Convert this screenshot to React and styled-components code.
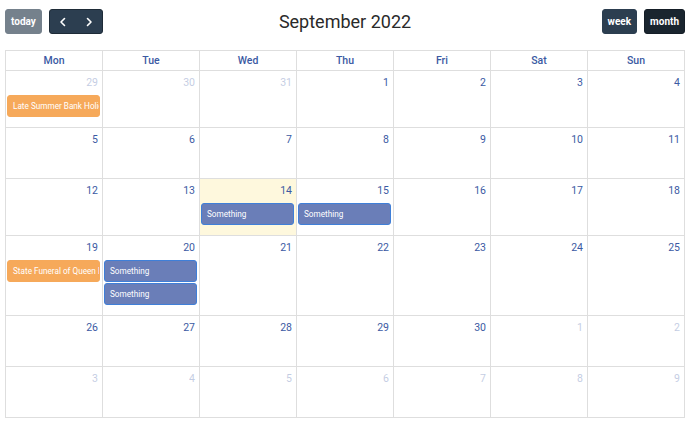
import React from "react";
import styled, { createGlobalStyle } from "styled-components";

const Global = createGlobalStyle`
  html, body { margin: 0; padding: 0; background: #fff; }
  body { font-family: Roboto, "Liberation Sans", sans-serif; }
`;

const Page = styled.div`
  padding: 9px 5px 0 5px;
  width: 690px;
  box-sizing: border-box;
`;

const Toolbar = styled.div`
  display: grid;
  grid-template-columns: 1fr auto 1fr;
  align-items: center;
  height: 25px;
  margin-bottom: 16px;
`;

const Group = styled.div`
  display: flex;
  gap: ${(p) => p.$gap || 0}px;
  justify-self: ${(p) => p.$justify || "start"};
`;

const Button = styled.button`
  height: 25px;
  padding: 0 ${(p) => p.$px ?? 6}px;
  background: ${(p) => (p.$active ? "#1a252f" : "#2c3e50")};
  border: 1px solid ${(p) => (p.$active ? "#151e27" : "#2c3e50")};
  color: #fff;
  font-family: Roboto, "Liberation Sans", sans-serif;
  font-weight: 700;
  font-size: 10px;
  border-radius: 3px;
  opacity: ${(p) => (p.$disabled ? 0.65 : 1)};
  display: flex;
  align-items: center;
  justify-content: center;
  box-sizing: border-box;
`;

const NavGroup = styled.div`
  display: flex;
  height: 25px;
  background: #2c3e50;
  border: 1px solid #1e2b37;
  border-radius: 3px;
  box-sizing: border-box;
  margin-left: 7px;
`;

const NavBtn = styled.span`
  width: 26px;
  display: flex;
  align-items: center;
  justify-content: center;
`;

const Title = styled.h2`
  margin: 0;
  font-size: 18px;
  font-weight: 400;
  color: #2a2a2a;
`;

const Grid = styled.div`
  display: grid;
  grid-template-columns: repeat(7, minmax(0, 1fr));
  width: 680px;
  box-sizing: border-box;
  border-right: 1px solid #dedede;
  border-bottom: 1px solid #dedede;
`;

const HeadCell = styled.div`
  height: 19px;
  border-left: 1px solid #dedede;
  border-top: 1px solid #dedede;
  display: flex;
  align-items: center;
  justify-content: center;
  font-size: 10.5px;
  font-weight: 500;
  color: #3b5aa3;
`;

const DayCell = styled.div`
  border-left: 1px solid #dedede;
  border-top: 1px solid #dedede;
  min-height: 51px;
  min-width: 0;
  padding-bottom: 10px;
  box-sizing: border-box;
  background: ${(p) => (p.$today ? "#fef8dd" : "#fff")};
  display: flex;
  flex-direction: column;
`;

const DayNum = styled.div`
  height: 24px;
  box-sizing: border-box;
  padding: 5px 4px 0 0;
  text-align: right;
  font-size: 10.5px;
  color: #3b5aa3;
  opacity: ${(p) => (p.$other ? 0.3 : 1)};
`;

const Events = styled.div`
  display: flex;
  flex-direction: column;
  gap: 1px;
`;

const Event = styled.div`
  height: 22px;
  box-sizing: border-box;
  margin: 0 2px 0 1px;
  border-radius: 3px;
  border: 1px solid ${(p) => (p.$kind === "holiday" ? "#f6a95a" : "#3f7fd8")};
  background: ${(p) => (p.$kind === "holiday" ? "#f6a95a" : "#6a7eb8")};
  color: #fff;
  font-size: 8.2px;
  line-height: 20px;
  padding-left: 5px;
  white-space: nowrap;
  overflow: hidden;
`;

const days = ["Mon", "Tue", "Wed", "Thu", "Fri", "Sat", "Sun"];

const cells = [];
[29, 30, 31].forEach((d) => cells.push({ d, other: true }));
for (let d = 1; d <= 30; d++) cells.push({ d });
for (let d = 1; d <= 9; d++) cells.push({ d, other: true });

const events = {
  "0": [{ kind: "holiday", title: "Late Summer Bank Holiday" }],
  "16": [{ kind: "ev", title: "Something" }],
  "17": [{ kind: "ev", title: "Something" }],
  "21": [{ kind: "holiday", title: "State Funeral of Queen Elizabeth II" }],
  "22": [
    { kind: "ev", title: "Something" },
    { kind: "ev", title: "Something" },
  ],
};

const Chevron = ({ dir }) => (
  <svg width="8" height="10" viewBox="0 0 8 10">
    <path
      d={dir === "left" ? "M5.5 1.5 L2 5 L5.5 8.5" : "M2.5 1.5 L6 5 L2.5 8.5"}
      fill="none"
      stroke="#fff"
      strokeWidth="1.6"
      strokeLinecap="round"
      strokeLinejoin="round"
    />
  </svg>
);

export default function App() {
  return (
    <>
      <Global />
      <Page>
        <Toolbar>
          <Group>
            <Button $disabled $px={5}>today</Button>
            <NavGroup>
              <NavBtn><Chevron dir="left" /></NavBtn>
              <NavBtn><Chevron dir="right" /></NavBtn>
            </NavGroup>
          </Group>
          <Title>September 2022</Title>
          <Group $justify="end" $gap={7}>
            <Button $px={5}>week</Button>
            <Button $active $px={5}>month</Button>
          </Group>
        </Toolbar>
        <Grid>
          {days.map((d) => (
            <HeadCell key={d}>{d}</HeadCell>
          ))}
          {cells.map((c, i) => (
            <DayCell key={i} $today={i === 16}>
              <DayNum $other={c.other}>{c.d}</DayNum>
              {events[i] && (
                <Events>
                  {events[i].map((e, j) => (
                    <Event key={j} $kind={e.kind}>{e.title}</Event>
                  ))}
                </Events>
              )}
            </DayCell>
          ))}
        </Grid>
      </Page>
    </>
  );
}
